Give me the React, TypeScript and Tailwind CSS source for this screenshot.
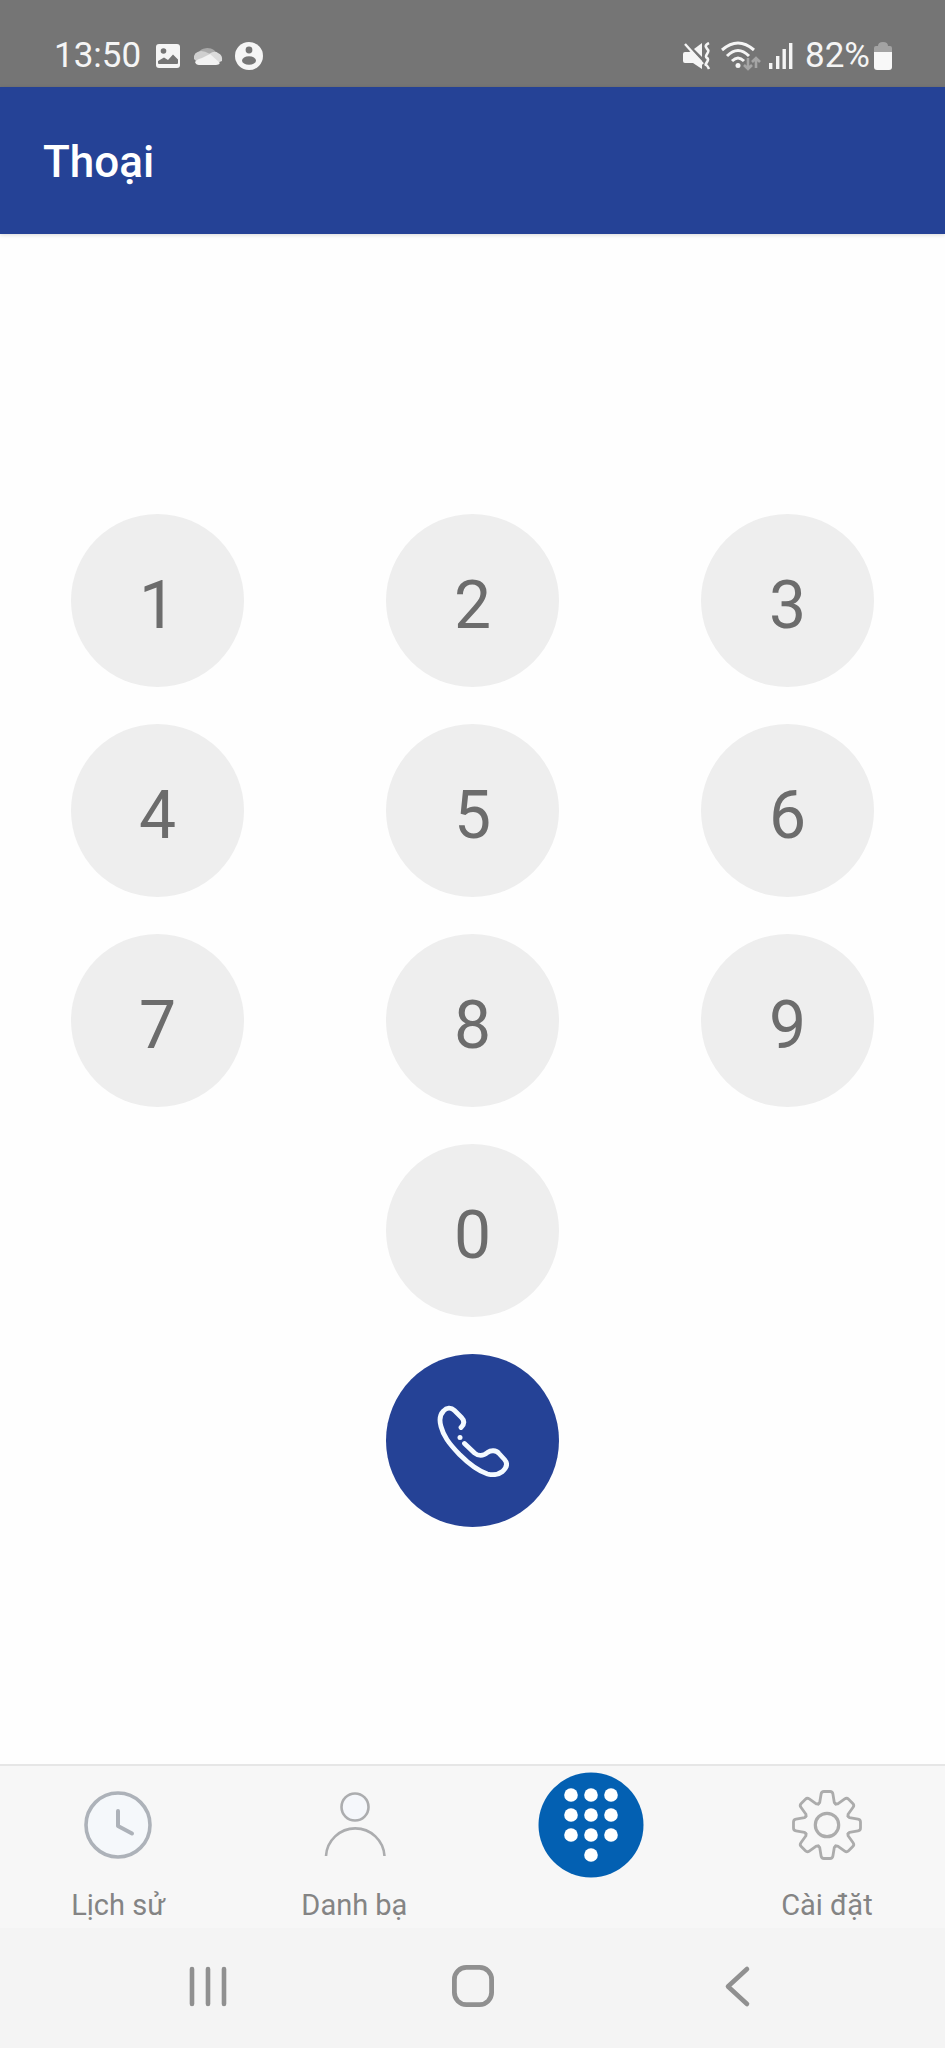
import type { ReactNode } from 'react'

const rows = [
  ['1', '2', '3'],
  ['4', '5', '6'],
  ['7', '8', '9'],
]

function Key({ label }: { label: string }) {
  return (
    <button
      type="button"
      className="flex size-[173px] items-center justify-center justify-self-center rounded-full bg-[#eeeeee] pt-2.5 text-[66px] leading-none text-[#6c6c6c]"
    >
      {label}
    </button>
  )
}

function StatusBar() {
  return (
    <div className="flex h-[87px] items-end justify-between bg-[#757575] pr-[53px] pl-[54px] text-[35px] leading-[40px] text-[#f5f5f5]">
      <div className="flex items-center pb-[11px]">
        <span>13:50</span>
        <svg className="ml-3.5 size-[26px]" viewBox="0 0 26 26">
          <rect x="1" y="1" width="24" height="24" rx="3" fill="#f5f5f5" />
          <circle cx="8.500" cy="8" r="2.800" fill="#757575" />
          <path d="M3 20v-2l6-3.500 4 2.500 5-5.500 5 5v3.500q0 1-1 1H4q-1 0-1-1z" fill="#757575" />
        </svg>
        <svg className="ml-3 h-[20px] w-[30px]" viewBox="0 0 30 20">
          <path d="M5 7a10 8 0 0 1 17-2l3 6-12 3z" fill="#a9a9a9" />
          <path d="M1 13q-1-7 7-8 4 0 9 3l-6 8H4z" fill="#cfcfcf" />
          <path d="M16 8q6-4 9-1 5 2 4 8l-5 2z" fill="#dcdcdc" />
          <path d="M2 16q2-3 7-4l8-4 10 9q-1 2-4 2H6q-3 0-4-3z" fill="#f2f2f2" />
        </svg>
        <svg className="ml-3 size-[28px]" viewBox="0 0 28 28">
          <circle cx="14" cy="14" r="14" fill="#f5f5f5" />
          <circle cx="14" cy="8" r="3.400" fill="#757575" />
          <ellipse cx="14" cy="18.500" rx="7" ry="4.300" fill="#757575" />
        </svg>
      </div>
      <div className="flex items-center pb-[11px]">
        <svg className="h-[28px] w-[28px]" viewBox="0 0 28 28" fill="none" stroke="#f5f5f5">
          <path d="M0 12q0-2 2-2h4l3-1 10 10v8l-9-6H2q-2 0-2-2z" fill="#f5f5f5" stroke="none" />
          <path d="M11 7l8-6v14z" fill="#f5f5f5" stroke="none" />
          <path d="M2 2l18 20" strokeWidth="2.400" />
          <path d="M26 1q-4 2-3 4t2 3-1 4 0 4 0 4-1 3 3 4" strokeWidth="2.600" />
        </svg>
        <svg className="ml-2.5 h-[30px] w-[40px]" viewBox="0 0 40 30" fill="none" stroke="#f5f5f5" strokeWidth="3">
          <path d="M1 9q16-14 32 0" />
          <path d="M6 15q11-11 22 0" />
          <path d="M11 20q6-6 12 0" />
          <circle cx="17" cy="24.500" r="2.500" fill="#f5f5f5" stroke="none" />
          <path d="M27 17v11m-4-4l4 4 4-4M35 27V17m-4 4l4-4 4 4" stroke="#a5a5a5" strokeWidth="2.600" />
        </svg>
        <svg className="ml-2 h-[26px] w-[24px]" viewBox="0 0 24 26" fill="#f5f5f5">
          <rect x="0" y="20" width="3.400" height="6" />
          <rect x="7" y="13" width="3.400" height="13" />
          <rect x="13.500" y="6" width="3.400" height="20" />
          <rect x="20" y="0" width="3.400" height="26" />
        </svg>
        <span className="ml-3">82%</span>
        <svg className="ml-1 h-[28px] w-[18px]" viewBox="0 0 18 28">
          <path d="M4 4q0-4 5-4t5 4h2q2 0 2 2v5H0V6q0-2 2-2z" fill="#a3a3a3" />
          <path d="M0 10h18v15q0 3-3 3H3q-3 0-3-3z" fill="#f8f8f8" />
        </svg>
      </div>
    </div>
  )
}

function PhoneIcon() {
  return (
    <svg className="size-[72px]" viewBox="0 0 72 72" fill="none" stroke="#f4faff" strokeWidth="4.800" strokeLinecap="round" strokeLinejoin="round">
      <path d="M24 22.500C27.500 19 27.500 15.500 24.500 12.500L17.500 5.500C14 2 9.500 2.500 6.500 6C2.500 10 2 14.500 4 21.500C6.500 31 11.500 38 22.500 49.500C32 59 40 65.500 50.500 69C56.500 70.500 61 70 65.500 66.500C70.500 62 70.500 58 67.500 54.500L62 48.500C59 45 54 45 50.500 47.500C46 51.500 41 51 37.500 48L27.500 38.500" />
      <circle cx="23" cy="32.500" r="2.500" fill="#f4faff" stroke="none" />
    </svg>
  )
}

function ClockIcon() {
  return (
    <svg className="size-[70px]" viewBox="0 0 70 70" fill="none" stroke="#adb2b9" strokeLinecap="round" strokeLinejoin="round">
      <circle cx="35" cy="35" r="32" strokeWidth="3.600" fill="#f5f8fb" />
      <path d="M35 21v15l14 7.500" strokeWidth="4" />
    </svg>
  )
}

function PersonIcon() {
  return (
    <svg className="size-[70px]" viewBox="0 0 70 70" fill="none" stroke="#acadaf" strokeWidth="2.600">
      <circle cx="36" cy="17" r="13.500" fill="#f5f7fb" />
      <path d="M7 66a29.300 29.300 0 0 1 58.500 0" />
    </svg>
  )
}

const teeth = [0, 45, 90, 135, 180, 225, 270, 315]

function GearIcon() {
  return (
    <svg className="size-[70px]" viewBox="-35 -35 70 70" fill="none" stroke="#acacac" strokeWidth="2.800" strokeLinejoin="round" strokeLinecap="round">
      {teeth.map((angle) => (
        <path
          key={angle}
          transform={`rotate(${angle})`}
          d="M-8.700-21L-7.300-22.500L-5.900-31Q-5.500-33.500-3-33.500H3Q5.500-33.500 5.900-31L7.300-22.500L8.700-21"
        />
      ))}
      <circle r="11.700" strokeWidth="3.200" />
    </svg>
  )
}

function DialpadIcon() {
  return (
    <svg className="size-[106px]" viewBox="0 0 106 106" fill="#fff">
      <circle cx="53" cy="53" r="52.500" fill="#0360b2" />
      {[23, 43, 63].map((y) => [33, 53, 73].map((x) => <circle key={`${x}-${y}`} cx={x} cy={y} r="6.800" />))}
      <circle cx="53" cy="83" r="6.800" />
    </svg>
  )
}

function Tab({ label, children }: { label: string; children: ReactNode }) {
  return (
    <button type="button" className="flex flex-col items-center gap-7 pt-6 text-[29px] leading-[34px] text-[#848484]">
      {children}
      <span>{label}</span>
    </button>
  )
}

export default function App() {
  return (
    <div className="flex min-h-screen flex-col bg-[#fefefe] font-[Roboto,sans-serif]">
      <StatusBar />

      <header className="flex h-[147px] items-center bg-[#254296] px-[43px] pt-0.5 shadow-[0_1px_4px_rgba(0,0,0,0.15)]">
        <h1 className="text-[44px] leading-[52px] font-medium text-white">Thoại</h1>
      </header>

      {/* Keypad */}
      <main className="grid grow grid-cols-3 content-start gap-y-[37px] pt-[280px]">
        {rows.flat().map((n) => (
          <Key key={n} label={n} />
        ))}
        <div className="col-span-3 grid justify-items-center gap-y-[37px]">
          <Key label="0" />
          <button
            type="button"
            aria-label="Gọi"
            className="flex size-[173px] items-center justify-center rounded-full bg-[#254296]"
          >
            <PhoneIcon />
          </button>
        </div>
      </main>

      {/* Bottom tabs */}
      <nav className="grid h-[164px] grid-cols-4 items-start border-t-2 border-[#e6e6e6] bg-[#f7f7f7]">
        <Tab label="Lịch sử">
          <ClockIcon />
        </Tab>
        <Tab label="Danh bạ">
          <PersonIcon />
        </Tab>
        <button type="button" aria-label="Bàn phím" aria-current="page" className="flex justify-center pt-[6px]">
          <DialpadIcon />
        </button>
        <Tab label="Cài đặt">
          <GearIcon />
        </Tab>
      </nav>

      {/* System navigation */}
      <div className="flex h-[120px] items-center justify-between bg-[#f4f4f4] px-[186px] pb-1">
        <button type="button" aria-label="Recents">
          <svg className="size-[44px]" viewBox="0 0 44 44" stroke="#909090" strokeWidth="4.600" strokeLinecap="round">
            <path d="M6 5v35M22 5v35M38 5v35" />
          </svg>
        </button>
        <button type="button" aria-label="Home">
          <svg className="size-[44px]" viewBox="0 0 44 44" fill="none" stroke="#909090" strokeWidth="4.800">
            <rect x="3.400" y="3.400" width="37.200" height="37.200" rx="12" />
          </svg>
        </button>
        <button type="button" aria-label="Back">
          <svg className="size-[44px]" viewBox="0 0 44 44" fill="none" stroke="#909090" strokeWidth="4.600" strokeLinecap="round" strokeLinejoin="round">
            <path d="M32 5L13 22.500L32 40" />
          </svg>
        </button>
      </div>
    </div>
  )
}
